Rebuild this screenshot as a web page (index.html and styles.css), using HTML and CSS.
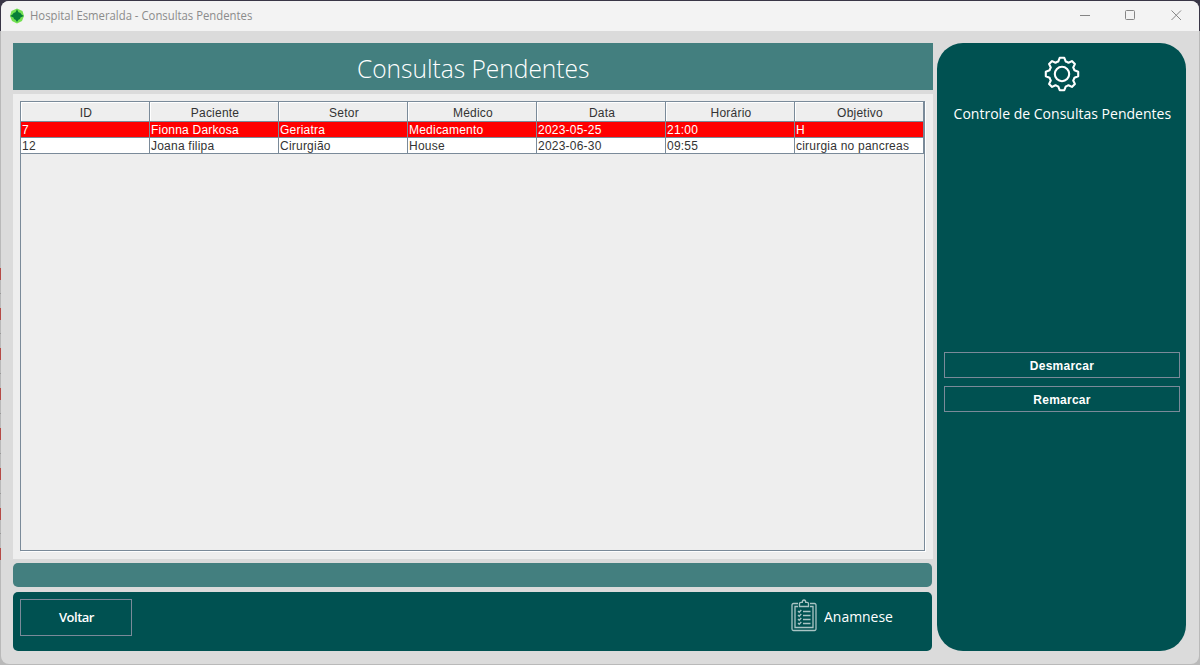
FILE: index.html
```html
<!DOCTYPE html>
<html lang="pt-BR">
<head>
<meta charset="utf-8">
<title>Hospital Esmeralda - Consultas Pendentes</title>
<link rel="stylesheet" href="styles.css">
</head>
<body>
<div class="window">
  <header class="titlebar">
    <svg class="logo" width="16" height="16" viewBox="0 0 16 16"><path d="M2.500 3 8 .5 13.500 3 15 8l-2 5-5 2.500L3 13 1 8Z" fill="#73e052"/><path d="M8 1.300l1.500 3 2 .7.700 1.200L14.800 8 11.500 9.500 11 11 9.500 11.700 8 14l-1.500-2.300L5 11 4.500 9.500 1.200 8 3.800 6.200 4.500 5l2-.7Z" fill="#087f38"/></svg>
    <span class="caption">Hospital Esmeralda - Consultas Pendentes</span>
    <svg class="controls" width="104" height="12" viewBox="0 0 104 12" fill="none" stroke="#858585" stroke-width="1"><path d="M0 6.500H10"/><rect x="45.500" y="1.500" width="9" height="9" rx="1"/><path d="M91.500 1.500 101 11M101 1.500 91.500 11"/></svg>
  </header>
  <div class="content">
    <main class="main">
      <h1 class="heading"><span>Consultas Pendentes</span></h1>
      <section class="panel">
        <div class="scroll">
          <div class="row head"><span>ID</span><span>Paciente</span><span>Setor</span><span>Médico</span><span>Data</span><span>Horário</span><span>Objetivo</span></div>
          <div class="row selected"><span>7</span><span>Fionna Darkosa</span><span>Geriatra</span><span>Medicamento</span><span>2023-05-25</span><span>21:00</span><span>H</span></div>
          <div class="row"><span>12</span><span>Joana filipa</span><span>Cirurgião</span><span>House</span><span>2023-06-30</span><span>09:55</span><span>cirurgia no pancreas</span></div>
        </div>
      </section>
      <div class="strip"></div>
      <footer class="footer">
        <button class="back">Voltar</button>
        <div class="anamnese">
          <svg width="26" height="33" viewBox="0 0 26 33" fill="none" stroke="#a9c4c4" stroke-width="1.300"><path d="M7 4.500H2.500a1.500 1.500 0 0 0-1.500 1.500v24a1.500 1.500 0 0 0 1.500 1.500h21a1.500 1.500 0 0 0 1.500-1.500V6a1.500 1.500 0 0 0-1.500-1.500H19"/><path d="M7 7.500H4v21h18v-21h-3"/><path d="M8.500 7.500V4.500c0-1 .7-1.200 1.500-1.200h1.300C11.300 1.500 12 1 13 1s1.700.5 1.700 2.300H16c.8 0 1.500.2 1.500 1.200v3Z"/><path d="m7 12 1.200 1.200L10.300 11M7 16l1.200 1.200L10.300 15M7 20l1.200 1.200L10.300 19M7 24l1.200 1.200L10.300 23M12 12.500h7.500M12 16.500h7.500M12 20.500h7.500M12 24.500h7.500"/></svg>
          <span>Anamnese</span>
        </div>
      </footer>
    </main>
    <aside class="side">
      <svg class="gear" width="36" height="36" viewBox="-18 -18 36 36" fill="none" stroke="#fff" stroke-width="2.100" stroke-linejoin="round"><circle r="7.200"/><path d="M-2.300-16.200H2.300L3.800-12.400Q5.200-12 6.500-11.200L9.900-12.900 12.900-9.900 11.200-6.500Q12-5.200 12.400-3.800L16.200-2.300V2.300L12.400 3.800Q12 5.200 11.200 6.500L12.900 9.900 9.900 12.900 6.500 11.200Q5.200 12 3.800 12.400L2.300 16.200H-2.300L-3.800 12.400Q-5.200 12-6.500 11.200L-9.900 12.900-12.900 9.900-11.200 6.500Q-12 5.200-12.400 3.800L-16.200 2.300V-2.300L-12.400-3.800Q-12-5.200-11.200-6.500L-12.900-9.900-9.900-12.900-6.500-11.200Q-5.200-12-3.800-12.400Z"/></svg>
      <p class="label">Controle de Consultas Pendentes</p>
      <div class="actions"><button>Desmarcar</button><button>Remarcar</button></div>
    </aside>
  </div>
</div>
</body>
</html>
```
FILE: styles.css
```css
* { box-sizing: border-box; }
body {
  margin: 0;
  height: 665px;
  padding: 1px 1px 1px;
  overflow: hidden;
  background:
    repeating-linear-gradient(#b54a46 0 12px, #b9b9b9 12px 25px, #999 25px 26px, #b9b9b9 26px 40px) 0 268px / 1px 293px no-repeat,
    linear-gradient(#393646 0 31px, #b9b9b9 31px);
  font-family: "Liberation Sans", Arial, sans-serif;
}
.window {
  height: 663px;
  display: flex;
  flex-direction: column;
  overflow: hidden;
  border-radius: 8px;
  background: #dbdbdb;
}
.titlebar {
  flex: none;
  height: 30px;
  display: flex;
  align-items: center;
  padding: 0 15px 0 8px;
  background: #f3f3f3;
}
.logo { flex: none; margin-bottom: 1px; }
.caption {
  margin-left: 5px;
  font: 12px/16px "Open Sans", "Noto Sans", sans-serif;
  color: #8b8b8b;
  white-space: nowrap;
  transform-origin: 0 50%;
  transform: scaleX(.943);
}
.controls { margin: 0 0 2px auto; }
.content { display: flex; gap: 4px; padding: 12px 13px 13px 12px; height: 633px; }
.main { width: 920px; display: flex; flex-direction: column; }
.heading {
  margin: 0 0 4px;
  height: 47px;
  display: flex;
  justify-content: center;
  align-items: center;
  background: #437f7f;
  color: #fff;
  font: 300 26px/40px "Open Sans", "Noto Sans", sans-serif;
}
.heading span { transform: scaleX(.943) translateY(1px); }
.panel { height: 465px; padding: 7px; background: #eee; }
.scroll { width: 905px; height: 450px; border: 1px solid #7a8a99; box-shadow: 1px 1px #fff; }
.row { display: grid; grid-template-columns: repeat(7, 129px); height: 16px; background: #fff; width: 903px; }
.row span {
  height: 16px;
  border: solid #7a8a99;
  border-width: 0 1px 1px 0;
  padding-left: 1px;
  font-size: 12px;
  line-height: 16px;
  letter-spacing: .22px;
  color: #333;
  white-space: nowrap;
}
.row.head { height: 20px; background: #eee; }
.head span { height: 20px; padding: 1px 0 0 2px; text-align: center; line-height: 20px; box-shadow: inset 1px 1px #fff; }
.row.selected { background: #f00; }
.row.selected span { color: #fff; }
.strip { width: 919px; height: 24px; margin: 4px 0 5px; border-radius: 5px; background: #437f7f; }
.footer {
  width: 919px;
  height: 59px;
  padding: 7px 39px 0 7px;
  display: flex;
  justify-content: space-between;
  border-radius: 5px;
  background: #005151;
}
button { padding: 0; border: 1px solid #7a8a99; background: transparent; color: #fff; }
.back { width: 112px; height: 37px; padding: 0 0 2px 1px; font: 600 13px "Open Sans", "Noto Sans", sans-serif; letter-spacing: -.5px; }
.anamnese {
  display: flex;
  gap: 7px;
  width: 102px;
  height: 35px;
  color: #fff;
  font: 15px/34px "Open Sans", "Noto Sans", sans-serif;
}
.anamnese svg { flex: none; }
.anamnese span { transform-origin: 0 50%; transform: scaleX(.93); }
.side {
  width: 249px;
  height: 608px;
  padding: 13px 6px 0 7px;
  border-radius: 26px;
  background: #005151;
  display: flex;
  flex-direction: column;
  align-items: center;
}
.label {
  margin: 11px 0 0;
  color: #fff;
  font: 15px/20px "Open Sans", "Noto Sans", sans-serif;
  white-space: nowrap;
  transform: scaleX(.935);
}
.actions { margin-top: 229px; display: flex; flex-direction: column; gap: 8px; width: 236px; }
.actions button { height: 26px; padding-top: 2px; font: bold 12px "Liberation Sans", Arial, sans-serif; letter-spacing: .25px; }
```
